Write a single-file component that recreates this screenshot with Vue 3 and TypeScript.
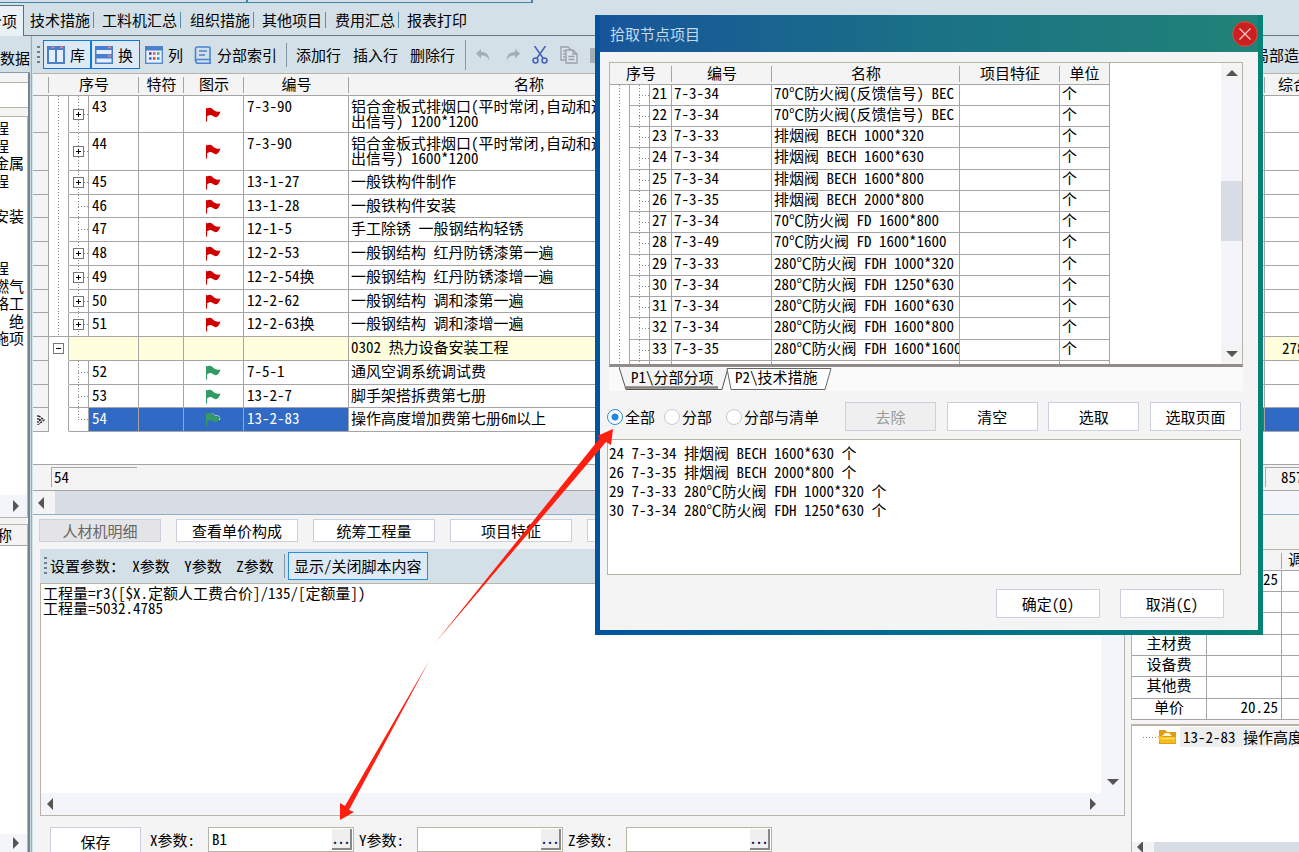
<script setup lang="ts">
import { ref } from 'vue'

type Kind = 'plus' | 'leaf' | 'last' | 'group'
interface Row {
  no: string
  code: string
  name: string[]
  kind: Kind
  flag?: 'red' | 'green'
  tall?: boolean
  selected?: boolean
  price?: string
}

const tabs = ['技术措施', '工料机汇总', '组织措施', '其他项目', '费用汇总', '报表打印']
const outline = ['程', '程', '金属', '程', '', '安装', '', '', '程', '燃气', '格工', '、绝', '施项']

const rows: Row[] = [
  { no: '43', code: '7-3-90', name: ['铝合金板式排烟口(平时常闭,自动和远方输', '出信号) 1200*1200'], kind: 'plus', flag: 'red', tall: true },
  { no: '44', code: '7-3-90', name: ['铝合金板式排烟口(平时常闭,自动和远方输', '出信号) 1600*1200'], kind: 'plus', flag: 'red', tall: true },
  { no: '45', code: '13-1-27', name: ['一般铁构件制作'], kind: 'plus', flag: 'red' },
  { no: '46', code: '13-1-28', name: ['一般铁构件安装'], kind: 'leaf', flag: 'red' },
  { no: '47', code: '12-1-5', name: ['手工除锈 一般钢结构轻锈'], kind: 'leaf', flag: 'red' },
  { no: '48', code: '12-2-53', name: ['一般钢结构 红丹防锈漆第一遍'], kind: 'plus', flag: 'red' },
  { no: '49', code: '12-2-54换', name: ['一般钢结构 红丹防锈漆增一遍'], kind: 'plus', flag: 'red' },
  { no: '50', code: '12-2-62', name: ['一般钢结构 调和漆第一遍'], kind: 'plus', flag: 'red' },
  { no: '51', code: '12-2-63换', name: ['一般钢结构 调和漆增一遍'], kind: 'plus', flag: 'red' },
  { no: '', code: '', name: ['0302 热力设备安装工程'], kind: 'group', price: '278' },
  { no: '52', code: '7-5-1', name: ['通风空调系统调试费'], kind: 'leaf', flag: 'green' },
  { no: '53', code: '13-2-7', name: ['脚手架搭拆费第七册'], kind: 'leaf', flag: 'green' },
  { no: '54', code: '13-2-83', name: ['操作高度增加费第七册6m以上'], kind: 'last', flag: 'green', selected: true },
]
const groupIndex = rows.findIndex((r) => r.kind === 'group')

const nodes = [
  ['21', '7-3-34', '70℃防火阀(反馈信号) BEC'],
  ['22', '7-3-34', '70℃防火阀(反馈信号) BEC'],
  ['23', '7-3-33', '排烟阀 BECH 1000*320'],
  ['24', '7-3-34', '排烟阀 BECH 1600*630'],
  ['25', '7-3-34', '排烟阀 BECH 1600*800'],
  ['26', '7-3-35', '排烟阀 BECH 2000*800'],
  ['27', '7-3-34', '70℃防火阀 FD 1600*800'],
  ['28', '7-3-49', '70℃防火阀 FD 1600*1600'],
  ['29', '7-3-33', '280℃防火阀 FDH 1000*320'],
  ['30', '7-3-34', '280℃防火阀 FDH 1250*630'],
  ['31', '7-3-34', '280℃防火阀 FDH 1600*630'],
  ['32', '7-3-34', '280℃防火阀 FDH 1600*800'],
  ['33', '7-3-35', '280℃防火阀 FDH 1600*1600'],
  ['', '', ''],
]

const fees = [
  ['', '20.25'],
  ['', ''],
  ['', ''],
  ['主材费', ''],
  ['设备费', ''],
  ['其他费', ''],
  ['单价', '20.25'],
]

const panels = ['人材机明细', '查看单价构成', '统筹工程量', '项目特征', '']
const params = ref([
  { key: 'X', value: 'B1' },
  { key: 'Y', value: '' },
  { key: 'Z', value: '' },
])
const scopes = [
  { id: 'all', label: '全部' },
  { id: 'part', label: '分部' },
  { id: 'list', label: '分部与清单' },
]
const scope = ref('all')
const script = ref('工程量=r3([$X.定额人工费合价]/135/[定额量])\n工程量=5032.4785')
const picked = ref(
  [
    '24 7-3-34 排烟阀 BECH 1600*630 个',
    '26 7-3-35 排烟阀 BECH 2000*800 个',
    '29 7-3-33 280℃防火阀 FDH 1000*320 个',
    '30 7-3-34 280℃防火阀 FDH 1250*630 个',
  ].join('\n'),
)
</script>

<template>
  <div class="app">
    <div class="top-strip"><div class="strip-box"><i></i></div></div>
    <nav class="tabs">
      <a class="tab active" href="#">分部分项</a>
      <div class="tab-rest">
        <a v-for="t in tabs" :key="t" class="tab" href="#"><span>{{ t }}</span></a>
      </div>
    </nav>

    <div class="body">
      <aside class="side">
        <div class="side-title"><span>中数据</span></div>
        <div class="side-search"></div>
        <div class="side-tree">
          <p v-for="(o, i) in outline" :key="i">{{ o }}</p>
          <div class="side-scroll"><i class="tri right"></i></div>
        </div>
        <div class="side-list">
          <div class="side-head"><span>称</span></div>
          <div class="side-scroll low"><i class="tri right"></i></div>
        </div>
      </aside>

      <main class="main">
        <div class="toolbar">
          <i class="grip"></i>
          <button class="tb on">
            <svg width="18" height="18" viewBox="0 0 18 18"><rect width="18" height="18" fill="#4a7fd0" /><rect x="2" y="4" width="6" height="12" fill="#e4effa" /><rect x="10" y="4" width="6" height="12" fill="#e4effa" /><path d="M4.500 1.500h3M13 1.500h3" stroke="#e88" stroke-width="1.500" /></svg>
            <span>库</span>
          </button>
          <button class="tb on second">
            <svg width="18" height="18" viewBox="0 0 18 18"><rect width="18" height="18" fill="#4a7fd0" /><rect x="1.500" y="4" width="15" height="4" fill="#e4effa" /><rect x="1.500" y="12.500" width="15" height="4" fill="#e4effa" /><path d="M13 1.500h3M13 10h3" stroke="#e88" stroke-width="1.500" /></svg>
            <span>换</span>
          </button>
          <button class="tb">
            <svg width="18" height="18" viewBox="0 0 18 18"><rect x=".7" y=".7" width="16.600" height="16.600" fill="#e6f0f8" stroke="#5b88cc" stroke-width="1.400" /><path d="M0 2.500h18" stroke="#4a7fd0" stroke-width="4" /><path d="M4 7.500h2.500" stroke="#603090" stroke-width="2.500" /><path d="M8 7.500h2.500" stroke="#e05090" stroke-width="2.500" /><path d="M12 7.500h2.500" stroke="#50b060" stroke-width="2.500" /><path d="M4 12.500h2.500" stroke="#3060e0" stroke-width="2.500" /><path d="M8 12.500h2.500" stroke="#e04020" stroke-width="2.500" /><path d="M12 12.500h2.500" stroke="#2090f0" stroke-width="2.500" /></svg>
            <span>列</span>
          </button>
          <button class="tb index">
            <svg width="18" height="18" viewBox="0 0 18 18" fill="none" stroke="#4a82d6" stroke-width="1.600"><path d="M3.500 1H15a1 1 0 0 1 1 1v11.500H3a2 2 0 0 0 0 3.700h14M3.500 1c-1.200 0-2 .8-2 2v12M16 13.500v3.500M5 5h8M5 9h6" /></svg>
            <span>分部索引</span>
          </button>
          <i class="sep"></i>
          <button class="tb txt">添加行</button>
          <button class="tb txt">插入行</button>
          <button class="tb txt">删除行</button>
          <i class="sep tall"></i>
          <div class="edit-icons">
            <button aria-label="撤销"><svg width="14" height="12" viewBox="0 0 14 12"><path d="M0 4.500 5 0v3c5 0 8 2 8.500 8.500C11.500 7.500 9 6.500 5 6.500v3z" fill="#a3aeb6" /></svg></button>
            <button aria-label="重做"><svg width="14" height="12" viewBox="0 0 14 12"><path d="M14 4.500 9 0v3C4 3 1 5 .5 11.500 2.500 7.500 5 6.500 9 6.500v3z" fill="#a3aeb6" /></svg></button>
            <button aria-label="剪切"><svg width="16" height="18" viewBox="0 0 16 18" fill="none" stroke="#4460b8" stroke-width="1.500"><path d="M2.500 0 11 12M13.500 0 5 12" /><circle cx="3.500" cy="14.500" r="2.500" /><circle cx="12.500" cy="14.500" r="2.500" /></svg></button>
            <button aria-label="复制"><svg width="18" height="18" viewBox="0 0 18 18" fill="#dce3e9" stroke="#9a9fac" stroke-width="1.300"><path d="M1 1h7l3 3v10H1zM3 5h3M3 8h3M3 11h3" /><path d="M6 4h7l4 4v9H6zM13 4v4h4M8.500 10.500h6M8.500 13.500h6" /></svg></button>
            <button aria-label="粘贴"><svg width="16" height="18" viewBox="0 0 16 18"><path d="M0 2h16v15H0zM5 0h6v3H5z" fill="#a3aeb6" /></svg></button>
          </div>
          <div class="tb-end">局部造价</div>
        </div>

        <div class="grid-pane">
          <table class="grid">
            <colgroup>
              <col class="c-ind" /><col class="c-g" /><col class="c-g" /><col class="c-no" /><col class="c-tag" />
              <col class="c-flag" /><col class="c-code" /><col class="c-name" /><col /><col class="c-price" />
            </colgroup>
            <thead>
              <tr>
                <th></th><th colspan="3">序号</th><th>特符</th><th>图示</th><th>编号</th><th>名称</th><th></th>
                <th class="price-h">综合单价</th>
              </tr>
            </thead>
            <tbody>
              <tr v-for="(r, i) in rows" :key="i" :class="[r.kind, { tall: r.tall, sel: r.selected }]">
                <td class="ind"><svg v-if="r.selected" width="8" height="10" viewBox="0 0 8 10"><path d="M1 0v10M2 1l5 4-5 4" fill="none" stroke="#222" stroke-width="1.300" stroke-dasharray="2 1" /><path d="M2 3.500l3 1.500-3 1.500z" fill="#222" /></svg></td>
                <td class="g1" :class="{ vline: i < groupIndex, edge: i === groupIndex - 1 }">
                  <i v-if="r.kind === 'group'" class="box minus"></i>
                </td>
                <td v-if="r.kind !== 'group'" class="g2" :class="r.kind"><i v-if="r.kind === 'plus'" class="box"></i></td>
                <td class="no" :colspan="r.kind === 'group' ? 2 : 1">{{ r.no }}</td>
                <td></td>
                <td class="flag">
                  <svg v-if="r.flag" width="15" height="15" viewBox="0 0 15 15" :class="r.flag"><path d="M.5 1v13.500" stroke="currentColor" stroke-width="1.200" /><path d="M1 1.500C3 .5 5 .5 6.500 2S10 5.500 14.500 4.500C13.500 7 12.500 10 10 10.200 8 10.400 6 8 4.500 8S2.500 8.500 1 9.500z" fill="currentColor" /><path v-if="r.selected" d="M7 1.500q2 2.500 4 2t3 3l-1 2" fill="none" stroke="#d8e8d8" stroke-dasharray="2 1" /></svg>
                </td>
                <td class="code">{{ r.code }}</td>
                <td class="name"><div v-for="n in r.name" :key="n">{{ n }}</div></td>
                <td></td>
                <td class="price">{{ r.price }}</td>
              </tr>
            </tbody>
          </table>
        </div>
        <div class="grid-foot">
          <span class="count">54</span>
          <span class="sum">857</span>
        </div>
        <div class="grid-scroll"><span><i class="tri left"></i></span><b></b></div>

        <div class="lower">
          <section class="editor">
            <div class="panel-buttons">
              <button v-for="(p, i) in panels" :key="i" class="btn" :disabled="i === 0">{{ p }}</button>
            </div>
            <div class="param-bar">
              <i class="grip"></i>
              <span class="lead">设置参数：</span>
              <button v-for="p in params" :key="p.key" class="plain">{{ p.key }}参数</button>
              <i class="sep"></i>
              <button class="toggle">显示/关闭脚本内容</button>
            </div>
            <div class="code-box">
              <div class="code-main">
                <textarea v-model="script" aria-label="脚本内容" spellcheck="false"></textarea>
                <div class="vtrack"><i class="tri down"></i></div>
              </div>
              <div class="htrack"><i class="tri left"></i><i class="tri right"></i></div>
            </div>
            <div class="param-row">
              <button class="btn save">保存</button>
              <div v-for="p in params" :key="p.key" class="param">
                <label :for="'param-' + p.key">{{ p.key }}参数:</label>
                <div class="field"><input :id="'param-' + p.key" v-model="p.value" type="text" /><button aria-label="选择">...</button></div>
              </div>
            </div>
          </section>

          <section class="fees">
            <table class="fee-table">
              <thead><tr><th class="f-name"></th><th class="f-val"></th><th>调整</th></tr></thead>
              <tbody>
                <tr v-for="(f, i) in fees" :key="i"><td class="f-name">{{ f[0] }}</td><td class="f-val">{{ f[1] }}</td><td></td></tr>
              </tbody>
            </table>
            <div class="fee-tree">
              <div class="fee-node">
                <i class="dots"></i>
                <svg width="19" height="16" viewBox="0 0 19 16"><path d="M1 1h6l2 2h9v12H1z" fill="#e59a10" /><path d="M4 7l3-3h4l3 3z" fill="#fff6d0" /><path d="M0 7h4l1 1h12.500v6H2z" fill="#f5bd1c" /><path d="M3 9.500h14" stroke="#ffe060" stroke-width="1.500" /></svg>
                <span>13-2-83 操作高度增加费</span>
              </div>
              <div class="fee-scroll"><span><i class="tri left"></i></span><b></b></div>
            </div>
          </section>
        </div>
      </main>
    </div>

    <div class="dialog" role="dialog" aria-label="拾取节点项目">
      <header class="dlg-title">
        <span>拾取节点项目</span>
        <button aria-label="关闭"><svg width="26" height="26" viewBox="0 0 26 26"><circle cx="13" cy="13" r="12.200" fill="#cc1f1f" stroke="#e8453c" /><path d="M7.500 7.500l11 11M18.500 7.500l-11 11" stroke="#f3c9c9" stroke-width="1.300" /></svg></button>
      </header>
      <div class="dlg-body">
        <div class="node-box">
          <div class="node-view">
            <table class="nodes">
              <colgroup><col class="n-g" /><col class="n-g" /><col class="n-no" /><col class="n-code" /><col class="n-name" /><col class="n-feat" /><col class="n-unit" /></colgroup>
              <thead><tr><th colspan="3">序号</th><th>编号</th><th>名称</th><th>项目特征</th><th>单位</th></tr></thead>
              <tbody>
                <tr v-for="n in nodes" :key="n[0]">
                  <td class="g1 vline"></td><td class="g2 leaf"></td>
                  <td class="no">{{ n[0] }}</td><td>{{ n[1] }}</td><td>{{ n[2] }}</td><td></td><td>{{ n[0] ? '个' : '' }}</td>
                </tr>
              </tbody>
            </table>
          </div>
          <div class="node-track"><span><i class="tri up"></i></span><b></b><span><i class="tri down"></i></span></div>
        </div>
        <div class="sheet-tabs">
          <button class="sheet"><svg width="110" height="24" viewBox="0 0 110 24"><path d="M0 0l7 22.500h96L109 1" fill="#f4f4f4" stroke="#555" /><path d="M7 20.500h92" stroke="#85807a" stroke-width="2.500" /></svg><span>P1\分部分项</span></button>
          <button class="sheet"><svg width="110" height="24" viewBox="0 0 110 24"><path d="M4 1.500l4 21H102L108 1.500z" fill="#fff" stroke="#666" /></svg><span>P2\技术措施</span></button>
        </div>
        <div class="scope-row">
          <label v-for="s in scopes" :key="s.id" :class="s.id"><input v-model="scope" type="radio" name="scope" :value="s.id" /><span>{{ s.label }}</span></label>
          <div class="scope-btns">
            <button class="btn" disabled>去除</button>
            <button class="btn">清空</button>
            <button class="btn">选取</button>
            <button class="btn">选取页面</button>
          </div>
        </div>
        <textarea v-model="picked" class="picked" aria-label="已选项目" spellcheck="false"></textarea>
        <div class="dlg-foot">
          <button class="btn">确定(<u>O</u>)</button>
          <button class="btn">取消(<u>C</u>)</button>
        </div>
      </div>
    </div>

    <svg class="arrows" viewBox="0 0 1299 852" aria-hidden="true">
      <path d="M435 643 600 438 597 436 613 429 611 445 606 442z" fill="#ff1e10" />
      <path d="M429 661 345 806 340 803 340 820 354 812 349 810z" fill="#ff1e10" />
    </svg>
  </div>
</template>

<style>
html,
body,
#app {
  height: 100%;
  margin: 0;
}
</style>

<style scoped>
.app {
  position: relative;
  display: flex;
  flex-direction: column;
  height: 100vh;
  overflow: hidden;
  background: #d3e0e8;
  color: #000;
  font-family: "Noto Sans CJK SC", "Noto Sans", sans-serif;
  font-size: 15px;
  line-height: 22px;
  font-feature-settings: "hwid";
  white-space: nowrap;
}
.app *,
.app *::before,
.app *::after {
  box-sizing: border-box;
}
button,
input,
textarea {
  margin: 0;
  padding: 0;
  border: 0;
  border-radius: 0;
  background: none;
  color: inherit;
  font: inherit;
  font-feature-settings: "hwid";
  outline: 0;
}
textarea {
  display: block;
  resize: none;
  overflow: hidden;
  white-space: pre;
}
a {
  color: inherit;
  text-decoration: none;
}
svg {
  display: block;
  flex: none;
}
table {
  border-collapse: separate;
  border-spacing: 0;
  table-layout: fixed;
}
th {
  font-weight: 400;
  padding: 0;
}
td {
  padding: 0;
}

/* top */
.top-strip {
  height: 5px;
  flex: none;
}
.strip-box {
  display: flex;
  justify-content: center;
  width: 533px;
  height: 3px;
  border: solid #3f86a8;
  border-width: 0 2px 1px 0;
}
.strip-box i {
  width: 2px;
  margin-left: -38px;
  background: #3f86a8;
}
.tabs {
  display: flex;
  flex: none;
  height: 31px;
}
.tab.active {
  display: flex;
  justify-content: flex-end;
  align-items: center;
  width: 24px;
  padding-right: 6px;
  overflow: hidden;
  border: solid #5e6e78;
  border-width: 1px 1px 0 0;
  background: #e9f1f6;
  line-height: 30px;
}
.tab-rest {
  display: flex;
  align-items: center;
  flex: 1;
  padding-left: 6px;
  border-bottom: 1px solid #6d777d;
}
.tab-rest .tab {
  padding-right: 3px;
  margin-right: 9px;
  line-height: 16px;
  border-right: 1px solid #5590b0;
}
.tab-rest .tab:nth-child(odd) {
  margin-right: 8px;
}
.tab-rest .tab:last-child {
  border: 0;
}
.body {
  display: flex;
  flex: 1;
  min-height: 0;
}

/* left */
.side {
  display: flex;
  flex-direction: column;
  flex: none;
  width: 33px;
  padding-right: 5px;
  background: linear-gradient(90deg, #75858f 0 2px, #c9d7df 2px 3px, #8fb0c4 3px 4px, #d3e0e8 4px) right / 5px 100% no-repeat #f4f4f4;
}
.side-title {
  display: flex;
  justify-content: flex-end;
  align-items: center;
  height: 37px;
  flex: none;
  margin-right: -2px;
  padding-top: 8px;
  overflow: hidden;
  border-bottom: 1px solid #8a9ba6;
  background: #d3e0e8;
}
.side-search {
  flex: none;
  height: 26px;
  margin: 9px 0 8px;
  border: solid #b8b4a8;
  border-width: 1px 0;
  background: #fff;
}
.side-tree {
  display: flex;
  flex-direction: column;
  flex: none;
  height: 402px;
  padding-top: 2px;
  overflow: hidden;
  border: solid #b8b4a8;
  border-width: 1px 1px 1px 0;
  background: #fff;
}
.side-tree p {
  height: 18px;
  margin: 0;
  line-height: 18px;
  text-indent: -6px;
}
.side-tree p:nth-child(even) {
  height: 17px;
}
.side-scroll {
  display: flex;
  align-items: center;
  justify-content: flex-end;
  height: 22px;
  margin-top: auto;
  padding-right: 8px;
  background: #f4f5fa;
}
.side-list {
  display: flex;
  flex-direction: column;
  flex: 1;
  margin-top: 6px;
  overflow: hidden;
  border: solid #b8b4a8;
  border-width: 1px 1px 0 0;
  background: #fff;
}
.side-head {
  height: 21px;
  line-height: 20px;
  text-indent: -3px;
  border-bottom: 1px solid #a5a5a5;
  background: #f4f4f4;
}
.side-scroll.low {
  height: 18px;
}
.tri {
  width: 0;
  height: 0;
  border: 6px solid transparent;
}
.tri.left {
  border-left-width: 0;
  border-right-color: #555;
}
.tri.right {
  border-right-width: 0;
  border-left-color: #555;
}
.tri.up {
  border-top-width: 0;
  border-bottom-color: #555;
}
.tri.down {
  border-bottom-width: 0;
  border-top-color: #555;
}

/* main toolbar */
.main {
  display: flex;
  flex-direction: column;
  flex: 1;
  min-width: 0;
}
.toolbar {
  display: flex;
  align-items: center;
  flex: none;
  height: 38px;
  padding-left: 4px;
  border-bottom: 1px solid #b8b4a8;
}
.grip {
  flex: none;
  width: 3px;
  height: 18px;
  background: repeating-linear-gradient(#6f7f88 0 2px, transparent 2px 5px);
}
.tb {
  display: flex;
  align-items: center;
  gap: 5px;
  height: 29px;
  padding: 0 5px;
}
.tb.on {
  width: 48px;
  padding: 0 3px;
  margin-left: 3px;
  border: 1px solid #0a7bd8;
  background: #dde9f4;
}
.tb.on.second {
  width: 49px;
  margin-left: 0;
}
.tb.index {
  padding: 0 6px;
}
.sep {
  flex: none;
  width: 1px;
  height: 24px;
  margin: 0 3px;
  background: #7f99a8;
}
.tb.txt {
  padding: 0 6px;
}
.sep.tall {
  height: 30px;
  margin: 0 10px 0 4px;
}
.edit-icons {
  display: flex;
  align-items: center;
  gap: 12px;
}
.edit-icons button:nth-child(2) {
  margin-left: 4px;
}
.tb-end {
  width: 45px;
  margin-left: auto;
  overflow: hidden;
}

/* main grid */
.grid-pane {
  flex: none;
  padding-bottom: 32px;
  overflow: hidden;
  border-bottom: 1px solid #a5a5a5;
  background: #fff;
}
.grid {
  width: 100%;
}
.c-ind {
  width: 16px;
}
.c-g {
  width: 20px;
}
.c-no {
  width: 50px;
}
.c-tag {
  width: 45px;
}
.c-flag {
  width: 60px;
}
.c-code {
  width: 105px;
}
.c-name {
  width: 360px;
}
.c-price {
  width: 34px;
}
th {
  height: 22px;
  line-height: 18px;
  vertical-align: top;
  border-bottom: 1px solid #a5a5a5;
  background: linear-gradient(#a5a5a5, #a5a5a5) right 3px / 1px 16px no-repeat #f4f4f4;
}
.grid th {
  line-height: 20px;
}
.grid th.price-h {
  padding-left: 13px;
  overflow: hidden;
  text-align: left;
  background: #f4f4f4;
}
.grid td {
  overflow: hidden;
  vertical-align: top;
  border: solid #a5a5a5;
  border-width: 0 1px 1px 0;
}
.grid tbody tr {
  height: 24px;
}
.grid tbody tr:nth-child(4n) {
  height: 23px;
}
.grid tbody tr.tall {
  height: 37px;
}
.grid tbody tr.tall:nth-child(2) {
  height: 38px;
}
.grid td.ind {
  padding-left: 4px;
  vertical-align: middle;
  background: #f4f4f4;
}
.grid td.g1 {
  border-bottom-color: transparent;
  vertical-align: middle;
}
.grid td.g1.edge {
  border-bottom-color: #a5a5a5;
}
.vline {
  background: repeating-linear-gradient(#888 0 1px, transparent 1px 3px) 9px 0 / 1px 100% no-repeat;
}
.g2 {
  background:
    repeating-linear-gradient(#888 0 1px, transparent 1px 3px) 9px 0 / 1px 100% no-repeat,
    repeating-linear-gradient(90deg, #888 0 1px, transparent 1px 3px) 9px 50% / 10px 1px no-repeat;
}
.g2.last {
  background:
    repeating-linear-gradient(#888 0 1px, transparent 1px 3px) 9px 0 / 1px 12px no-repeat,
    repeating-linear-gradient(90deg, #888 0 1px, transparent 1px 3px) 9px 50% / 10px 1px no-repeat;
}
.grid td.g2 {
  vertical-align: middle;
}
.box {
  display: block;
  width: 11px;
  height: 11px;
  margin-left: 4px;
  border: 1px solid #777;
  background:
    linear-gradient(#000, #000) 50% 50% / 5px 1px no-repeat,
    linear-gradient(#000, #000) 50% 50% / 1px 5px no-repeat,
    #fff;
}
.box.minus {
  background: linear-gradient(#000, #000) 50% 50% / 5px 1px no-repeat #fff;
}
.grid td.no,
.grid td.code {
  padding-left: 3px;
  line-height: 19px;
}
.grid td.name {
  padding: 2px 0 0 2px;
  line-height: 15px;
}
.grid td.flag {
  padding-left: 22px;
  vertical-align: middle;
}
.flag .red {
  color: #d00000;
}
.flag .green {
  color: #339966;
}
.grid tr.group td:nth-child(n + 3) {
  background: #ffffdd;
}
.grid tr.sel td:nth-child(n + 4):not(.name) {
  background: #316ac5;
  color: #fff;
}
.grid td.price {
  padding-left: 17px;
  border-right: 0;
}
.grid-foot {
  display: flex;
  justify-content: space-between;
  flex: none;
  height: 26px;
  padding: 2px 0 3px 18px;
  border-bottom: 1px solid #a5a5a5;
  background: #f4f4f4;
}
.grid-foot span {
  border: solid #aaa;
  border-width: 1px 0 0 1px;
  line-height: 18px;
}
.count {
  width: 86px;
  padding-left: 2px;
}
.sum {
  width: 34px;
  padding-left: 15px;
  overflow: hidden;
}
.grid-scroll {
  display: flex;
  flex: none;
  height: 24px;
  border-bottom: 1px solid #8fb0c4;
  background: #f4f5fa;
}
.grid-scroll span,
.fee-scroll span {
  display: flex;
  align-items: center;
  width: 22px;
  padding-left: 5px;
  background: #f4f4f4;
}
.grid-scroll b {
  width: 88%;
  background: #d8dce5;
}

/* lower panes */
.lower {
  display: flex;
  flex: 1;
  min-height: 0;
  background: #f4f4f4;
}
.editor {
  display: flex;
  flex-direction: column;
  flex: 1;
  min-width: 0;
  padding-left: 6px;
}
.panel-buttons {
  display: flex;
  flex: none;
  gap: 15px;
  height: 34px;
  padding: 4px 0 7px;
}
.btn {
  border: 1px solid #ccd0dc;
  background: #fff;
  line-height: 20px;
}
.btn:disabled {
  background: #efefef;
  color: #999;
}
.panel-buttons .btn {
  width: 122px;
  flex: none;
}
.panel-buttons .btn:disabled {
  background: #e4e4e6;
  color: #666;
}
.param-bar {
  display: flex;
  align-items: center;
  flex: none;
  height: 34px;
  margin-left: 1px;
  padding-left: 4px;
  background: #d3e0e8;
}
.param-bar .lead {
  margin-left: 3px;
}
.param-bar .plain {
  width: 52px;
  flex: none;
}
.toggle {
  height: 28px;
  padding: 0 5px;
  border: 1px solid #2a8ddd;
  background: #dde9f4;
}
.code-box {
  display: flex;
  flex-direction: column;
  flex: 1;
  min-height: 0;
  margin-left: 1px;
  border: 1px solid #b8b4a8;
  background: #fff;
}
.code-main {
  display: flex;
  flex: 1;
}
.code-main textarea {
  flex: 1;
  padding: 1px 2px;
  line-height: 15px;
}
.vtrack {
  display: flex;
  align-items: flex-end;
  justify-content: center;
  width: 23px;
  padding-bottom: 8px;
  background: #f4f5fa;
}
.htrack {
  display: flex;
  align-items: center;
  justify-content: space-between;
  height: 22px;
  padding: 0 28px 0 6px;
  background: #f4f5fa;
}
.param-row {
  display: flex;
  flex: none;
  height: 36px;
  padding: 11px 0 0 11px;
  overflow: hidden;
}
.save {
  width: 91px;
  height: 29px;
  margin-right: 9px;
  line-height: 27px;
}
.param {
  display: flex;
}
.param label {
  width: 58px;
  line-height: 26px;
}
.field {
  display: flex;
  width: 146px;
  height: 25px;
  margin-right: 5px;
  padding: 1px;
  border: 1px solid #b8b4a8;
  background: #fff;
}
.field input {
  flex: 1;
  min-width: 0;
  padding: 0 0 2px 2px;
}
.field button {
  width: 20px;
  border: solid #888;
  border-width: 0 2px 2px 0;
  background: #efefef;
  color: #102050;
  font-size: 12px;
  font-weight: 700;
  line-height: 20px;
}
.fees {
  display: flex;
  flex-direction: column;
  flex: none;
  width: 168px;
  margin-left: 6px;
  padding-top: 34px;
  overflow: hidden;
}
.fee-table {
  width: 240px;
  border: solid #b8b4a8;
  border-width: 1px 0 0 1px;
}
.fee-table .f-name {
  width: 75px;
  text-align: center;
}
.fee-table .f-val {
  width: 75px;
  padding-right: 3px;
  text-align: right;
}
.fee-table th {
  height: 21px;
  padding-left: 6px;
  text-align: left;
}
.fee-table tbody tr {
  height: 21px;
}
.fee-table tbody tr:nth-child(3n) {
  height: 22px;
}
.fee-table td {
  line-height: 16px;
  vertical-align: top;
  border: solid #a5a5a5;
  border-width: 0 1px 1px 0;
  background: #fff;
}
.fee-tree {
  display: flex;
  flex-direction: column;
  justify-content: space-between;
  flex: 1;
  width: 240px;
  margin-top: 4px;
  border: solid #b8b4a8;
  border-width: 2px 0 0 1px;
  background: #fff;
}
.fee-node {
  display: flex;
  align-items: center;
  padding: 1px 0 0 11px;
}
.fee-node span {
  margin-left: 3px;
  padding: 0 3px;
  line-height: 20px;
  background: #eee;
}
.dots {
  width: 15px;
  height: 1px;
  background: repeating-linear-gradient(90deg, #888 0 1px, transparent 1px 3px);
}
.fee-scroll {
  display: flex;
  height: 10px;
  overflow: hidden;
}
.fee-scroll b {
  flex: 1;
  background: #d8dce5;
}

/* dialog */
.dialog {
  position: absolute;
  top: 15px;
  left: 595px;
  width: 668px;
  padding: 0 5px 5px;
  background: linear-gradient(90deg, #00549f, #006f90 50%, #078276);
}
.dlg-title {
  display: flex;
  align-items: center;
  justify-content: space-between;
  height: 37px;
  padding: 0 0 0 10px;
  background: linear-gradient(90deg, #17559b, #1a7185 50%, #208377);
  color: #c4d9ec;
}
.dlg-body {
  padding: 10px 17px 12px 7px;
  background: #f4f4f4;
}
.node-box {
  display: flex;
  justify-content: space-between;
  height: 305px;
  margin: 0 -2px 0 2px;
  border: solid #b8b4a8;
  border-width: 1px 1px 3px;
  border-bottom-color: #8e8b88;
  background: #fff;
}
.node-view {
  overflow: hidden;
}
.nodes {
  width: 500px;
}
.n-g {
  width: 20px;
}
.n-no {
  width: 22px;
}
.n-code {
  width: 100px;
}
.n-name {
  width: 188px;
}
.n-feat {
  width: 100px;
}
.n-unit {
  width: 50px;
}
.nodes th:last-child {
  border-right: 1px solid #a5a5a5;
  background: #f4f4f4;
}
.nodes th {
  line-height: 20px;
}
.nodes tbody tr {
  height: 21px;
}
.nodes tbody tr:nth-child(4n) {
  height: 22px;
}
.nodes td {
  padding-left: 2px;
  overflow: hidden;
  line-height: 16px;
  vertical-align: top;
  border: solid #a5a5a5;
  border-width: 0 1px 1px 0;
}
.nodes td.g1 {
  border-bottom: 0;
}
.node-track {
  display: flex;
  flex-direction: column;
  width: 21px;
  background: #f4f5fa;
}
.node-track span {
  display: flex;
  align-items: center;
  justify-content: center;
  height: 20px;
  background: #f4f4f4;
}
.node-track b {
  height: 60px;
  margin: 98px 0 auto;
  background: #d8dce5;
}
.sheet-tabs {
  display: flex;
  height: 24px;
  margin: 0 -2px 0 2px;
  padding-left: 10px;
  background: #fafafa;
}
.sheet {
  display: grid;
  width: 104px;
}
.sheet > * {
  grid-area: 1 / 1;
}
.sheet span {
  z-index: 1;
  padding-left: 12px;
  line-height: 19px;
  text-align: left;
}
.scope-row {
  display: flex;
  height: 48px;
  padding: 11px 0 8px;
}
.scope-row label {
  display: flex;
  align-items: center;
  gap: 2px;
  margin-right: 9px;
}
.scope-row label.part {
  margin-right: 14px;
}
.scope-row input {
  appearance: none;
  width: 16px;
  height: 16px;
  border: 1px solid #c6cad8;
  border-radius: 50%;
  background: #fff;
}
.scope-row input:checked {
  border: 1px solid #2a8ddd;
  background: radial-gradient(#1f87e5 0 3px, #fff 4px);
}
.scope-btns {
  display: flex;
  justify-content: space-between;
  flex: 1;
  margin-left: 17px;
}
.scope-btns .btn {
  width: 91px;
}
.picked {
  width: 100%;
  height: 136px;
  padding: 3px 1px;
  border: 1px solid #b8b4a8;
  background: #fff;
  line-height: 19px;
}
.dlg-foot {
  display: flex;
  justify-content: flex-end;
  gap: 20px;
  padding: 14px 17px 0 0;
}
.dlg-foot .btn {
  width: 104px;
  height: 29px;
}
.arrows {
  position: absolute;
  top: 0;
  left: 0;
  width: 1299px;
  height: 852px;
  pointer-events: none;
}
</style>
